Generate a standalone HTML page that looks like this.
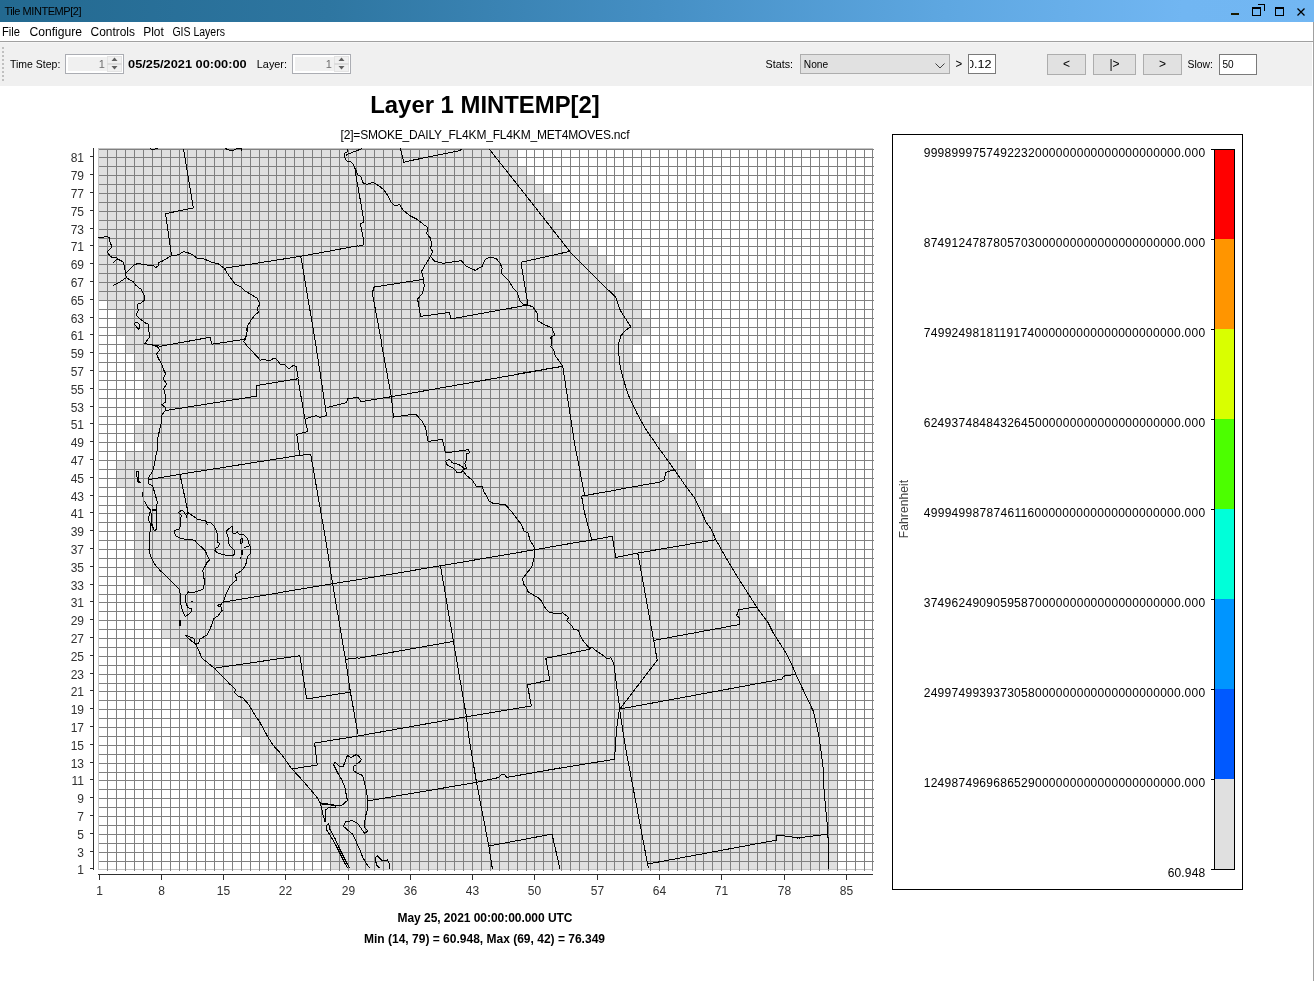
<!DOCTYPE html>
<html><head><meta charset="utf-8"><title>Tile MINTEMP[2]</title>
<style>
html,body{margin:0;padding:0;background:#fff;}
body{width:1314px;height:981px;overflow:hidden;position:relative;font-family:"Liberation Sans",sans-serif;}
svg{position:absolute;left:0;top:0;display:block;will-change:transform;}
svg text{font-family:"Liberation Sans",sans-serif;}
.ui11{font-size:11px;fill:#000;}
.ui11b{font-size:11px;font-weight:bold;fill:#000;}
.ui12{font-size:12px;fill:#000;}
.tk{font-size:12px;fill:#303030;}
.ttl{font-size:24px;font-weight:bold;fill:#000;}
.sub{font-size:12px;fill:#000;}
.ft{font-size:12px;font-weight:bold;fill:#000;}
.lg{font-size:12px;fill:#000;}
.fh{font-size:12px;fill:#404040;}
</style></head><body>
<svg id="plot" width="1314" height="981" viewBox="0 0 1314 981">
<rect x="0" y="0" width="1314" height="981" fill="#fff"/>
<defs><linearGradient id="tg" x1="0" y1="0" x2="1" y2="0"><stop offset="0" stop-color="#236990"/><stop offset="0.25" stop-color="#2e76a1"/><stop offset="0.5" stop-color="#458fc4"/><stop offset="0.72" stop-color="#5ea7e1"/><stop offset="0.9" stop-color="#71b6f2"/><stop offset="1" stop-color="#72b7f3"/></linearGradient></defs>
<rect x="0" y="0" width="1314" height="22" fill="url(#tg)"/>
<text x="4.5" y="14.8" class="ui11" textLength="77" lengthAdjust="spacing">Tile MINTEMP[2]</text>
<g shape-rendering="crispEdges" fill="none" stroke="#000"><path d="M1231 14H1239" stroke="#1a1a00" stroke-width="2"/><path d="M1252 8H1261" stroke-width="2"/><path d="M1252.5 9V15.5H1260.5V9"/><path d="M1258 4.5H1264.5V11"/><path d="M1275 8H1284" stroke-width="2"/><path d="M1275.5 9V15.5H1283.5V9"/></g>
<path d="M1297.5 8.5L1304.5 15.5M1304.5 8.5L1297.5 15.5" stroke="#000" stroke-width="1.3" fill="none"/>
<rect x="0" y="22" width="1314" height="19" fill="#fff"/>
<text x="2" y="35.7" class="ui12" textLength="18" lengthAdjust="spacingAndGlyphs">File</text>
<text x="29.4" y="35.7" class="ui12" textLength="52.6" lengthAdjust="spacingAndGlyphs">Configure</text>
<text x="90.5" y="35.7" class="ui12" textLength="44.5" lengthAdjust="spacingAndGlyphs">Controls</text>
<text x="143.2" y="35.7" class="ui12" textLength="20.6" lengthAdjust="spacingAndGlyphs">Plot</text>
<text x="172.4" y="35.7" class="ui12" textLength="52.5" lengthAdjust="spacingAndGlyphs">GIS Layers</text>
<rect x="0" y="41" width="1314" height="1" fill="#a0a0a0"/>
<rect x="0" y="42" width="1312" height="44" fill="#f0f0f0"/>
<rect x="0" y="42" width="1312" height="1" fill="#f6f6f6"/>
<rect x="1312" y="42" width="1" height="44" fill="#fff"/>
<rect x="1313" y="22" width="1" height="959" fill="#a0a0a0"/>
<rect x="2" y="47" width="2" height="2" fill="#c0c0c0"/><rect x="2" y="51" width="2" height="2" fill="#c0c0c0"/><rect x="2" y="55" width="2" height="2" fill="#c0c0c0"/><rect x="2" y="59" width="2" height="2" fill="#c0c0c0"/><rect x="2" y="63" width="2" height="2" fill="#c0c0c0"/><rect x="2" y="67" width="2" height="2" fill="#c0c0c0"/><rect x="2" y="71" width="2" height="2" fill="#c0c0c0"/><rect x="2" y="75" width="2" height="2" fill="#c0c0c0"/><rect x="2" y="79" width="2" height="2" fill="#c0c0c0"/>
<text x="10" y="67.8" class="ui11" textLength="50.3" lengthAdjust="spacingAndGlyphs">Time Step:</text>
<rect x="65.5" y="54.5" width="58" height="19" fill="#fff" stroke="#abadb3" shape-rendering="crispEdges"/><rect x="68" y="57" width="39" height="14" fill="#f0f0f0"/><rect x="107" y="56" width="15" height="16" fill="#f0f0f0"/><rect x="107.5" y="56.5" width="14" height="15" fill="none" stroke="#e3e3e3" shape-rendering="crispEdges"/><rect x="107" y="63" width="15" height="2" fill="#dcdcdc"/><path d="M114.5 57.6L117.5 61H111.5Z" fill="#606060"/><path d="M114.5 69.4L117.5 66H111.5Z" fill="#606060"/><text x="104.8" y="68" text-anchor="end" class="ui11" style="fill:#6d6d6d">1</text>
<text x="128.1" y="67.8" class="ui11b" textLength="118.6" lengthAdjust="spacingAndGlyphs">05/25/2021 00:00:00</text>
<text x="256.8" y="67.8" class="ui11" textLength="30.2" lengthAdjust="spacingAndGlyphs">Layer:</text>
<rect x="292.5" y="54.5" width="58" height="19" fill="#fff" stroke="#abadb3" shape-rendering="crispEdges"/><rect x="295" y="57" width="39" height="14" fill="#f0f0f0"/><rect x="334" y="56" width="15" height="16" fill="#f0f0f0"/><rect x="334.5" y="56.5" width="14" height="15" fill="none" stroke="#e3e3e3" shape-rendering="crispEdges"/><rect x="334" y="63" width="15" height="2" fill="#dcdcdc"/><path d="M341.5 57.6L344.5 61H338.5Z" fill="#606060"/><path d="M341.5 69.4L344.5 66H338.5Z" fill="#606060"/><text x="331.8" y="68" text-anchor="end" class="ui11" style="fill:#6d6d6d">1</text>
<text x="765.5" y="67.8" class="ui11" textLength="27.5" lengthAdjust="spacingAndGlyphs">Stats:</text>
<rect x="800.5" y="54.5" width="149" height="19" fill="#e1e1e1" stroke="#adadad" shape-rendering="crispEdges"/>
<text x="803.8" y="67.6" class="ui11" textLength="24.4" lengthAdjust="spacingAndGlyphs">None</text>
<path d="M935.5 63.5L940 68L944.5 63.5" stroke="#404040" stroke-width="1" fill="none"/>
<text x="955.6" y="68" class="ui12" textLength="6.7" lengthAdjust="spacingAndGlyphs">&gt;</text>
<rect x="968.5" y="54.5" width="27" height="19" fill="#fff" stroke="#7a7a7a" shape-rendering="crispEdges"/>
<clipPath id="tb1"><rect x="970" y="55" width="25" height="18"/></clipPath>
<text x="967" y="67.8" class="ui11" clip-path="url(#tb1)" textLength="24.6" lengthAdjust="spacingAndGlyphs">0.12</text>
<rect x="1047.5" y="54.5" width="38" height="20" fill="#e1e1e1" stroke="#adadad" shape-rendering="crispEdges"/>
<text x="1066.5" y="68.3" text-anchor="middle" class="ui12">&lt;</text>
<rect x="1093.5" y="54.5" width="42" height="20" fill="#e1e1e1" stroke="#adadad" shape-rendering="crispEdges"/>
<text x="1114.5" y="68.3" text-anchor="middle" class="ui12">|&gt;</text>
<rect x="1143.5" y="54.5" width="38" height="20" fill="#e1e1e1" stroke="#adadad" shape-rendering="crispEdges"/>
<text x="1162.5" y="68.3" text-anchor="middle" class="ui12">&gt;</text>
<text x="1187.6" y="67.8" class="ui11" textLength="25.4" lengthAdjust="spacingAndGlyphs">Slow:</text>
<rect x="1219.5" y="54.5" width="37" height="20" fill="#fff" stroke="#7a7a7a" shape-rendering="crispEdges"/>
<text x="1222.4" y="67.8" class="ui11" textLength="11.2" lengthAdjust="spacingAndGlyphs">50</text>
<rect x="98" y="149" width="419" height="8" fill="#e0e0e0"/>
<rect x="98" y="157" width="419" height="9" fill="#e0e0e0"/>
<rect x="98" y="166" width="428" height="9" fill="#e0e0e0"/>
<rect x="98" y="175" width="436" height="9" fill="#e0e0e0"/>
<rect x="98" y="184" width="445" height="9" fill="#e0e0e0"/>
<rect x="98" y="193" width="454" height="9" fill="#e0e0e0"/>
<rect x="98" y="202" width="463" height="9" fill="#e0e0e0"/>
<rect x="98" y="211" width="463" height="9" fill="#e0e0e0"/>
<rect x="98" y="220" width="472" height="9" fill="#e0e0e0"/>
<rect x="98" y="229" width="481" height="9" fill="#e0e0e0"/>
<rect x="98" y="238" width="490" height="8" fill="#e0e0e0"/>
<rect x="98" y="246" width="499" height="9" fill="#e0e0e0"/>
<rect x="98" y="255" width="508" height="9" fill="#e0e0e0"/>
<rect x="98" y="264" width="516" height="9" fill="#e0e0e0"/>
<rect x="98" y="273" width="525" height="9" fill="#e0e0e0"/>
<rect x="98" y="282" width="534" height="9" fill="#e0e0e0"/>
<rect x="98" y="291" width="534" height="9" fill="#e0e0e0"/>
<rect x="107" y="300" width="534" height="9" fill="#e0e0e0"/>
<rect x="116" y="309" width="525" height="9" fill="#e0e0e0"/>
<rect x="116" y="318" width="534" height="9" fill="#e0e0e0"/>
<rect x="116" y="327" width="534" height="8" fill="#e0e0e0"/>
<rect x="125" y="335" width="516" height="9" fill="#e0e0e0"/>
<rect x="125" y="344" width="507" height="9" fill="#e0e0e0"/>
<rect x="134" y="353" width="498" height="9" fill="#e0e0e0"/>
<rect x="134" y="362" width="507" height="9" fill="#e0e0e0"/>
<rect x="143" y="371" width="498" height="9" fill="#e0e0e0"/>
<rect x="143" y="380" width="498" height="9" fill="#e0e0e0"/>
<rect x="143" y="389" width="507" height="9" fill="#e0e0e0"/>
<rect x="143" y="398" width="507" height="9" fill="#e0e0e0"/>
<rect x="143" y="407" width="507" height="9" fill="#e0e0e0"/>
<rect x="143" y="416" width="516" height="8" fill="#e0e0e0"/>
<rect x="134" y="424" width="534" height="9" fill="#e0e0e0"/>
<rect x="134" y="433" width="543" height="9" fill="#e0e0e0"/>
<rect x="143" y="442" width="534" height="9" fill="#e0e0e0"/>
<rect x="125" y="451" width="561" height="9" fill="#e0e0e0"/>
<rect x="116" y="460" width="579" height="9" fill="#e0e0e0"/>
<rect x="116" y="469" width="587" height="9" fill="#e0e0e0"/>
<rect x="116" y="478" width="587" height="9" fill="#e0e0e0"/>
<rect x="125" y="487" width="587" height="9" fill="#e0e0e0"/>
<rect x="125" y="496" width="587" height="9" fill="#e0e0e0"/>
<rect x="125" y="505" width="596" height="8" fill="#e0e0e0"/>
<rect x="134" y="513" width="596" height="9" fill="#e0e0e0"/>
<rect x="134" y="522" width="596" height="9" fill="#e0e0e0"/>
<rect x="134" y="531" width="605" height="9" fill="#e0e0e0"/>
<rect x="134" y="540" width="605" height="9" fill="#e0e0e0"/>
<rect x="134" y="549" width="614" height="9" fill="#e0e0e0"/>
<rect x="134" y="558" width="614" height="9" fill="#e0e0e0"/>
<rect x="134" y="567" width="623" height="9" fill="#e0e0e0"/>
<rect x="143" y="576" width="614" height="9" fill="#e0e0e0"/>
<rect x="152" y="585" width="614" height="9" fill="#e0e0e0"/>
<rect x="161" y="594" width="614" height="8" fill="#e0e0e0"/>
<rect x="161" y="602" width="614" height="9" fill="#e0e0e0"/>
<rect x="161" y="611" width="623" height="9" fill="#e0e0e0"/>
<rect x="161" y="620" width="631" height="9" fill="#e0e0e0"/>
<rect x="161" y="629" width="631" height="9" fill="#e0e0e0"/>
<rect x="170" y="638" width="631" height="9" fill="#e0e0e0"/>
<rect x="179" y="647" width="622" height="9" fill="#e0e0e0"/>
<rect x="179" y="656" width="631" height="9" fill="#e0e0e0"/>
<rect x="187" y="665" width="623" height="9" fill="#e0e0e0"/>
<rect x="196" y="674" width="623" height="9" fill="#e0e0e0"/>
<rect x="205" y="683" width="614" height="8" fill="#e0e0e0"/>
<rect x="214" y="691" width="614" height="9" fill="#e0e0e0"/>
<rect x="223" y="700" width="605" height="9" fill="#e0e0e0"/>
<rect x="232" y="709" width="596" height="9" fill="#e0e0e0"/>
<rect x="241" y="718" width="587" height="9" fill="#e0e0e0"/>
<rect x="241" y="727" width="596" height="9" fill="#e0e0e0"/>
<rect x="250" y="736" width="587" height="9" fill="#e0e0e0"/>
<rect x="250" y="745" width="587" height="9" fill="#e0e0e0"/>
<rect x="259" y="754" width="578" height="9" fill="#e0e0e0"/>
<rect x="268" y="763" width="569" height="9" fill="#e0e0e0"/>
<rect x="276" y="772" width="561" height="8" fill="#e0e0e0"/>
<rect x="276" y="780" width="561" height="9" fill="#e0e0e0"/>
<rect x="285" y="789" width="552" height="9" fill="#e0e0e0"/>
<rect x="294" y="798" width="543" height="9" fill="#e0e0e0"/>
<rect x="303" y="807" width="534" height="9" fill="#e0e0e0"/>
<rect x="303" y="816" width="534" height="9" fill="#e0e0e0"/>
<rect x="312" y="825" width="525" height="9" fill="#e0e0e0"/>
<rect x="312" y="834" width="525" height="9" fill="#e0e0e0"/>
<rect x="321" y="843" width="516" height="9" fill="#e0e0e0"/>
<rect x="321" y="852" width="516" height="9" fill="#e0e0e0"/>
<rect x="330" y="861" width="507" height="8" fill="#e0e0e0"/>
<path d="M98.5 148V870M98 148.5H873M98 869.5H873" stroke="#c4c4c4" stroke-width="1" fill="none" shape-rendering="crispEdges"/>
<path d="M107.5 149V871M116.5 149V871M125.5 149V871M134.5 149V871M143.5 149V871M152.5 149V871M161.5 149V871M170.5 149V871M179.5 149V871M187.5 149V871M196.5 149V871M205.5 149V871M214.5 149V871M223.5 149V871M232.5 149V871M241.5 149V871M250.5 149V871M259.5 149V871M268.5 149V871M276.5 149V871M285.5 149V871M294.5 149V871M303.5 149V871M312.5 149V871M321.5 149V871M330.5 149V871M339.5 149V871M348.5 149V871M356.5 149V871M365.5 149V871M374.5 149V871M383.5 149V871M392.5 149V871M401.5 149V871M410.5 149V871M419.5 149V871M428.5 149V871M437.5 149V871M445.5 149V871M454.5 149V871M463.5 149V871M472.5 149V871M481.5 149V871M490.5 149V871M499.5 149V871M508.5 149V871M517.5 149V871M526.5 149V871M534.5 149V871M543.5 149V871M552.5 149V871M561.5 149V871M570.5 149V871M579.5 149V871M588.5 149V871M597.5 149V871M606.5 149V871M614.5 149V871M623.5 149V871M632.5 149V871M641.5 149V871M650.5 149V871M659.5 149V871M668.5 149V871M677.5 149V871M686.5 149V871M695.5 149V871M703.5 149V871M712.5 149V871M721.5 149V871M730.5 149V871M739.5 149V871M748.5 149V871M757.5 149V871M766.5 149V871M775.5 149V871M784.5 149V871M792.5 149V871M801.5 149V871M810.5 149V871M819.5 149V871M828.5 149V871M837.5 149V871M846.5 149V871M855.5 149V871M864.5 149V871M872.5 149V871M99 149.5H874M99 157.5H874M99 166.5H874M99 175.5H874M99 184.5H874M99 193.5H874M99 202.5H874M99 211.5H874M99 220.5H874M99 229.5H874M99 238.5H874M99 246.5H874M99 255.5H874M99 264.5H874M99 273.5H874M99 282.5H874M99 291.5H874M99 300.5H874M99 309.5H874M99 318.5H874M99 327.5H874M99 335.5H874M99 344.5H874M99 353.5H874M99 362.5H874M99 371.5H874M99 380.5H874M99 389.5H874M99 398.5H874M99 407.5H874M99 416.5H874M99 424.5H874M99 433.5H874M99 442.5H874M99 451.5H874M99 460.5H874M99 469.5H874M99 478.5H874M99 487.5H874M99 496.5H874M99 505.5H874M99 513.5H874M99 522.5H874M99 531.5H874M99 540.5H874M99 549.5H874M99 558.5H874M99 567.5H874M99 576.5H874M99 585.5H874M99 594.5H874M99 602.5H874M99 611.5H874M99 620.5H874M99 629.5H874M99 638.5H874M99 647.5H874M99 656.5H874M99 665.5H874M99 674.5H874M99 683.5H874M99 691.5H874M99 700.5H874M99 709.5H874M99 718.5H874M99 727.5H874M99 736.5H874M99 745.5H874M99 754.5H874M99 763.5H874M99 772.5H874M99 780.5H874M99 789.5H874M99 798.5H874M99 807.5H874M99 816.5H874M99 825.5H874M99 834.5H874M99 843.5H874M99 852.5H874M99 861.5H874" stroke="#808080" stroke-width="1" fill="none" shape-rendering="crispEdges"/>
<clipPath id="gc"><rect x="98" y="148" width="775" height="722"/></clipPath>
<path clip-path="url(#gc)" d="M183.5 149.0 L193.4 208.0 L165.6 213.6 L171.5 255.7 M217.9 263.5 L224.2 268.3 M224.2 268.3 L300.8 256.3 L358.0 245.8 M300.8 256.3 L315.7 344.0 M224.2 268.3 L229.2 276.2 L235.2 284.2 L241.1 287.1 L245.1 291.1 L252.1 295.1 L257.0 298.1 L260.0 304.0 L257.0 309.0 L258.6 312.0 L255.0 315.0 L251.1 319.9 L247.1 326.9 L246.7 330.9 M136.2 315.0 L138.7 318.0 L142.7 320.9 L146.7 323.9 L148.1 323.9 L149.3 334.9 L150.1 336.8 L146.7 340.8 L144.7 344.0 M133.8 323.5 L136.8 322.3 L140.1 324.9 L138.7 329.5 L135.8 325.9 L133.8 323.5 M358.0 186.8 L364.0 221.6 L360.4 224.1 L364.0 242.4 L363.0 245.0 L358.0 246.4 M358.0 174.8 L361.0 176.8 L363.0 182.8 L366.9 184.4 L372.9 182.4 L378.9 185.8 L383.8 189.7 L387.8 195.7 L390.8 201.7 L394.8 205.7 L399.7 204.7 L402.7 209.6 L409.7 215.6 L417.6 219.6 L423.6 224.5 L428.0 227.5 L426.6 233.5 L430.6 238.4 L431.5 244.4 L430.6 248.4 L432.5 251.4 L430.6 256.3 M430.6 256.3 L434.5 261.3 L443.5 263.3 L461.4 260.7 L466.3 266.3 L472.3 269.3 L475.3 270.3 L482.2 266.3 L485.2 259.3 L489.2 257.3 L496.1 258.3 L500.1 263.3 L502.1 268.3 L501.5 273.2 L509.1 281.2 L513.0 288.1 L517.0 292.1 L520.0 301.1 L523.0 304.0 L528.0 305.0 M430.6 256.3 L425.6 264.3 L421.6 271.2 L423.6 279.2 L424.2 286.2 L422.6 293.1 L417.6 299.1 L420.6 316.4 L449.4 312.4 L451.0 319.0 L528.0 305.0 L532.9 307.0 L537.9 314.0 L537.9 320.9 L544.9 324.9 L551.8 327.9 L554.8 334.9 M424.2 279.2 L373.9 287.1 L372.3 293.1 L381.9 344.0 M412.3 160.1 L460.4 150.6 L461.4 149.0 M489.2 149.0 L500.1 162.9 L523.0 191.7 L569.7 251.4 M569.7 251.4 L521.0 262.3 L528.0 305.0 M569.7 251.4 L598.5 280.8 L615.4 296.7 L620.4 310.6 L630.9 326.9 L625.3 330.5 L621.0 335.5 L619.0 342.4 L618.8 352.4 L619.4 362.3 L622.4 376.2 L628.3 395.1 L637.3 414.0 L646.2 429.9 L655.2 442.8 L657.1 445.8 M554.8 334.9 L550.8 337.5 L551.8 342.4 L550.8 346.4 L553.8 350.4 L555.4 356.3 L558.7 360.3 L562.7 366.3 M518.0 373.8 L562.7 366.3 L574.7 444.0 M150.7 344.0 L157.6 347.0 L159.6 350.0 L156.6 353.9 L158.6 358.9 L161.6 363.9 L163.6 369.8 L165.6 373.8 L163.2 378.8 L166.6 383.8 L163.6 388.7 L165.6 395.7 L166.0 401.6 L162.0 404.6 L165.6 407.6 L165.2 410.6 L161.6 415.6 L161.2 423.5 L159.2 431.5 L157.6 439.4 L158.0 447.4 L156.0 455.3 L154.7 463.3 L152.7 471.2 L148.7 477.2 L148.1 479.6 M165.2 410.6 L257.0 396.1 L256.0 385.7 L297.8 378.8 M298.0 379.4 L304.7 417.5 L307.7 431.5 L296.8 434.4 L299.8 455.3 M315.7 344.0 L326.6 415.6 L319.6 417.5 L316.7 415.6 L305.7 418.5 M326.6 407.6 L346.5 402.6 L347.5 398.7 L358.0 397.3 M148.1 479.6 L180.5 474.2 L299.8 455.3 L310.7 454.3 L325.6 539.0 M180.0 474.7 L188.2 513.0 M147.9 479.5 L149.2 484.3 L152.6 485.7 L155.4 495.2 L157.4 502.7 L156.5 504.8 L156.7 510.3 L156.7 528.7 L154.7 530.8 L150.6 523.9 L148.5 519.8 L149.2 514.4 L150.6 510.3 L147.9 507.5 L145.8 503.4 L144.4 501.4 M152.0 509.7 L156.7 509.7 M152.0 510.3 L156.7 510.3 M150.6 511.6 L152.0 517.1 L151.3 522.6 L154.0 529.4 M150.6 523.9 L149.9 533.5 L149.2 550.0 M136.7 471.3 L138.3 471.3 L138.7 480.2 L140.3 482.9 L138.3 482.9 L136.9 476.1 L136.7 471.3 M142.0 491.8 L142.0 496.6 M142.5 491.8 L142.5 496.6 M381.5 344.0 L391.4 396.7 L393.4 417.1 L415.6 414.0 L421.6 420.5 L425.6 427.5 L428.0 441.4 L442.5 439.4 L445.5 452.9 L468.3 449.7 L469.7 452.9 L466.3 453.7 L466.9 459.3 L464.9 463.3 L466.3 468.2 L462.4 470.2 L466.3 475.2 L472.3 480.2 L476.3 486.1 L482.2 486.7 L484.2 492.1 L489.2 501.0 L493.2 503.4 L505.1 504.6 L511.1 511.0 L517.0 518.9 L521.0 523.9 L524.0 530.9 L528.0 532.8 L529.9 539.8 M445.5 461.3 L449.4 459.3 L452.4 462.9 L458.4 464.3 L464.3 468.2 L461.4 472.2 L457.4 472.8 L453.4 468.2 L447.4 465.3 L445.5 461.3 M358.0 397.3 L361.0 401.6 L391.4 396.7 L562.7 366.3 M574.7 444.0 L584.6 495.1 L581.6 496.1 L584.6 513.0 L591.6 539.0 M581.6 496.1 L618.0 489.7 M657.1 445.8 L661.5 451.8 L674.4 469.7 L685.3 485.6 L694.3 497.5 L700.2 509.4 L706.2 522.3 L711.2 529.3 L716.1 540.2 L725.1 556.1 L735.0 573.0 L747.0 591.9 L757.9 609.0 M674.4 469.7 L665.5 472.6 L664.5 479.6 L660.5 482.0 L618.0 489.5 M591.5 539.0 L590.9 540.2 M578.0 542.2 L590.9 540.2 L612.2 536.2 L615.8 557.5 L637.6 553.1 L716.1 539.6 M187.4 512.5 L186.5 518.0 M187.4 512.5 L185.6 514.8 L183.8 511.6 L181.5 510.2 L178.7 512.5 L181.5 515.7 L180.1 520.3 L180.6 525.8 L179.2 529.0 L175.0 530.4 L174.1 532.7 L176.0 535.9 L179.2 537.9 L182.8 538.4 L185.1 539.5 L192.5 540.0 L195.0 540.3 L197.5 543.7 L201.7 547.3 L205.3 550.6 L206.7 554.2 L208.5 557.9 L209.4 560.2 L207.2 562.0 L205.3 566.1 L203.5 568.4 L202.6 570.7 L203.5 574.4 L203.0 577.2 L204.9 579.4 M187.4 512.5 L190.6 514.3 L193.9 516.6 L197.5 519.4 L201.2 520.1 L205.3 520.7 L206.7 522.6 L207.2 524.4 L206.7 522.6 L210.4 522.3 L213.1 524.9 L215.4 528.5 L217.0 533.1 L217.7 537.7 L217.5 542.3 L219.5 543.2 L219.1 545.0 L217.7 547.3 L215.9 547.8 L215.0 550.6 L216.8 552.4 L220.0 553.8 L225.0 555.1 L233.3 555.6 L234.7 553.3 L234.7 550.6 L232.4 548.7 L230.1 546.0 L228.3 542.8 L228.7 538.6 L227.3 535.4 L226.4 531.3 L229.2 528.5 L232.4 526.2 L232.8 533.1 L236.1 533.1 L237.0 531.7 L239.7 534.5 L243.4 534.5 L246.1 536.8 L248.0 540.0 L248.0 543.2 L249.8 545.0 L250.7 548.7 L250.6 553.3 L248.0 556.1 L246.6 559.7 L246.1 563.4 L244.8 566.1 L242.5 569.8 L238.8 572.6 L235.6 574.4 L236.1 578.1 L236.5 580.0 M240.6 538.6 L242.0 538.2 L242.5 540.9 L242.0 543.2 L240.6 543.2 L240.2 540.9 L240.6 538.6 M241.1 550.1 L242.3 550.1 L242.5 554.2 L241.4 554.2 L241.1 550.1 M244.3 547.8 L248.9 546.0 M240.2 557.9 L241.1 558.3 M148.9 549.0 L150.3 555.8 L154.4 564.0 L160.5 570.9 L168.7 578.4 L174.2 584.5 L179.0 589.3 L181.0 596.8 L180.7 603.6 L182.4 610.5 L185.1 616.6 L189.2 613.9 L191.9 611.2 L191.3 608.4 L187.8 607.7 L185.8 602.3 L185.8 595.4 L188.5 592.0 L193.3 592.7 L198.8 590.7 L202.9 589.3 L204.9 581.8 L204.9 579.3 M179.9 620.0 L179.9 625.5 M180.6 620.0 L180.6 625.5 L181.3 625.5 M191.3 601.6 L193.3 601.6 M192.9 592.4 L194.7 592.4 M236.5 580.0 L235.7 580.4 L230.2 585.9 L226.1 594.1 L223.4 601.6 L220.6 605.0 L222.0 610.5 L217.9 615.9 L213.8 618.7 L210.4 628.2 L207.0 635.1 L199.5 639.2 L198.8 643.3 L194.7 643.3 L194.0 638.5 L185.8 635.1 L187.8 637.8 L196.0 644.6 L202.2 658.3 L213.8 667.8 L228.8 683.0 M219.3 603.9 L220.6 605.3 L219.3 606.6 L217.9 605.3 L219.3 603.9 M325.6 539.0 L332.6 583.7 L345.5 659.3 L350.4 692.1 L358.0 734.0 M223.2 602.2 L332.6 583.7 L358.0 579.7 M214.3 668.2 L299.8 655.7 L306.7 699.0 L350.4 692.1 M345.5 659.3 L358.0 657.7 M228.5 683.0 L235.4 689.1 L234.7 692.6 L238.1 696.0 L242.9 698.0 L248.4 704.2 L254.5 714.4 L260.0 722.6 L268.2 737.6 L273.6 745.8 L281.8 754.7 L291.4 768.4 L300.9 778.6 L310.5 789.6 L317.3 797.8 L320.8 803.9 M356.0 736.3 L314.6 743.1 L317.3 765.0 L290.7 769.1 M356.0 754.7 L350.8 757.5 L347.4 755.4 L343.3 766.3 L339.9 767.0 L335.1 762.2 L333.7 765.0 L337.1 771.8 L341.9 780.0 L344.7 786.8 L347.4 800.5 L341.9 805.3 L336.5 805.9 L328.3 804.6 L320.8 803.9 M356.0 765.0 L353.5 766.3 L353.5 770.4 L356.0 772.5 M358.0 579.7 L440.5 565.8 L533.9 549.9 L577.8 542.2 M440.5 565.8 L453.4 641.4 L466.3 715.9 L468.3 734.0 M358.0 658.3 L453.4 641.4 M529.9 539.8 L532.9 545.0 L534.9 548.9 L533.9 558.9 L531.9 566.8 L527.0 572.8 L522.6 578.8 L523.4 583.7 L526.6 587.7 L528.0 591.7 L532.9 594.7 L537.9 597.6 L541.9 601.6 L544.9 607.6 L549.8 612.5 L556.8 613.5 L562.7 612.9 L568.7 617.5 L566.7 620.5 L571.7 625.5 L573.7 629.4 L578.6 630.4 L580.6 636.4 L583.6 641.4 L589.6 648.3 L592.6 647.3 L595.5 650.3 L604.5 656.3 L606.5 658.3 M589.6 649.3 L545.8 658.3 L549.8 680.1 L527.4 684.7 L531.3 706.0 M758.0 609.0 L768.0 622.5 L772.9 632.4 L784.9 651.3 L790.8 662.2 L795.8 674.2 L804.7 693.1 L813.7 711.9 M637.8 553.3 L653.7 640.4 L657.2 660.3 L619.9 709.0 M653.7 640.4 L739.5 624.5 L739.1 617.5 L736.7 615.5 L738.7 609.6 L756.0 607.0 M619.9 709.0 L717.3 691.1 L781.9 679.1 L783.3 676.2 L795.8 674.2 M606.0 658.3 L610.9 657.9 L613.9 664.2 L616.9 688.1 L619.9 709.0 M356.1 736.3 L357.6 736.1 L466.0 716.8 L531.6 705.9 M468.4 733.9 L476.5 782.4 L488.8 846.0 L492.4 868.9 M367.6 800.9 L476.5 782.4 L498.8 777.5 L500.8 775.1 L504.7 774.5 L506.7 777.5 L560.0 767.9 M488.8 846.0 L552.0 834.1 L560.0 868.9 M356.1 754.6 L358.6 756.0 L361.6 759.6 L359.6 762.0 L356.1 763.9 M356.1 772.5 L362.6 775.5 L364.6 783.4 L366.6 791.4 L367.6 800.9 L367.6 809.3 L365.2 817.2 L364.6 827.2 L367.6 831.1 L364.6 833.5 L361.6 829.1 L357.6 823.2 L351.7 820.6 L345.7 821.8 L343.3 826.2 L347.7 830.1 L352.7 834.1 L354.7 838.1 L356.7 843.1 L359.6 849.0 L362.6 857.0 L366.6 863.9 L369.6 867.9 M326.8 825.2 L328.8 823.6 L329.8 829.1 L334.8 838.1 L338.8 847.0 L342.7 855.0 L346.7 862.9 L349.7 867.9 M326.8 825.2 L326.8 830.1 L331.8 838.1 L336.8 847.0 L340.7 855.0 L344.7 862.9 L347.7 867.9 M379.5 867.9 L376.5 864.9 L375.1 858.0 L377.5 856.0 L382.5 860.9 L387.5 860.0 L389.4 863.9 L389.4 868.9 M619.5 708.9 L625.5 747.6 L648.3 867.9 M619.5 708.9 L616.5 729.8 L614.5 759.2 L540.0 771.5 M648.3 863.9 L776.5 840.1 L776.1 836.1 L778.5 835.1 L800.0 838.1 M813.6 711.9 L815.8 721.8 L818.8 735.7 L820.8 749.6 L823.1 767.5 L823.7 785.4 L825.7 809.3 L827.7 829.1 L828.3 845.0 L828.7 868.9 M796.9 838.1 L827.7 834.1 M98.0 237.4 L102.1 237.8 L104.0 236.9 L106.7 236.0 L109.0 237.4 L109.9 241.5 L111.8 246.6 L109.9 249.3 L107.2 252.1 L109.9 255.7 L111.8 257.1 L116.3 257.1 L117.7 258.5 L115.0 261.2 L113.1 262.6 M117.7 259.1 L122.8 261.7 L124.1 265.4 L125.1 270.0 L125.5 273.6 L126.4 277.3 M113.1 285.6 L120.0 281.9 L125.5 278.2 L127.4 277.8 M125.5 273.2 L134.7 264.4 L138.8 263.5 L145.7 264.9 L153.0 265.4 L155.8 267.7 L158.1 265.8 L158.6 262.6 L162.2 261.2 L166.8 258.5 L171.4 255.7 M171.4 255.7 L178.7 254.8 L183.3 251.6 L187.4 252.5 L192.5 254.8 L198.0 258.9 L200.8 258.0 L206.3 259.9 L212.7 262.6 L218.0 263.5 M126.4 277.3 L129.7 280.0 L132.9 281.4 L135.6 285.1 L138.4 287.4 L141.1 289.2 L143.0 292.9 L144.3 295.6 L144.3 300.2 L141.1 303.0 L137.9 303.9 L137.4 306.7 L138.4 310.3 L136.5 314.0 L136.1 315.0 M347.2 148.7 L347.7 151.9 L345.4 152.3 L344.0 154.2 L344.5 156.9 L345.9 159.7 L347.7 161.5 L350.5 161.5 L352.8 163.8 L354.6 166.6 L356.0 170.2 L357.3 173.9 L358.0 174.8 M362.4 148.5 L347.7 154.2 L345.9 155.6 M354.6 166.6 L356.9 181.7 L358.0 186.7 M400.5 148.5 L403.7 162.2 L420.0 158.8 M150.0 148.8 L152.5 149.4 L158.3 148.6 M225.3 148.5 L228.6 150.0 L233.7 150.0 L236.2 148.9 L241.2 148.9 L241.2 150.5 M320.6 804.7 L321.6 808.3 L322.5 812.9 L323.9 817.5 L324.8 821.7 L325.5 821.7 L325.5 817.5 L325.2 810.2 L328.4 807.9 L332.1 807.2 L335.3 807.2 L336.2 805.6 M320.6 804.7 L321.6 803.5 L325.7 803.8 L332.6 804.4 L334.4 805.8 L336.2 805.6 M322.0 804.0 L325.7 804.3 M324.5 818.4 L324.5 821.7 M144.4 342.8 L147.9 344.2 L154.7 345.5 L160.8 346.2 L210.0 337.3 L212.1 344.2 L244.2 339.4 M247.6 328.2 L247.4 330.0 L246.3 335.5 L245.4 338.7 L243.8 341.5 L246.1 344.7 L248.3 347.4 L252.9 352.0 L257.5 357.1 L260.3 360.1 L264.4 359.4 L267.2 360.3 L270.4 360.7 L273.6 358.0 L276.8 359.4 L280.0 363.9 L282.8 364.9 L285.0 364.7 L287.8 368.1 L289.6 368.1 L293.3 365.3 L296.1 366.7 L297.4 373.1 L298.3 378.2 M243.8 339.2 L245.4 338.7" stroke="#000" stroke-width="1" fill="none" stroke-linejoin="round" shape-rendering="crispEdges"/>
<path d="M93.5 148V870M90 868.5H94M90 851.5H94M90 833.5H94M90 815.5H94M90 797.5H94M90 779.5H94M90 762.5H94M90 744.5H94M90 726.5H94M90 708.5H94M90 690.5H94M90 673.5H94M90 655.5H94M90 637.5H94M90 619.5H94M90 601.5H94M90 584.5H94M90 566.5H94M90 548.5H94M90 530.5H94M90 512.5H94M90 495.5H94M90 477.5H94M90 459.5H94M90 441.5H94M90 423.5H94M90 406.5H94M90 388.5H94M90 370.5H94M90 352.5H94M90 334.5H94M90 317.5H94M90 299.5H94M90 281.5H94M90 263.5H94M90 245.5H94M90 228.5H94M90 210.5H94M90 192.5H94M90 174.5H94M90 156.5H94M98 874.5H873M99.5 875V880M161.5 875V880M223.5 875V880M285.5 875V880M348.5 875V880M410.5 875V880M472.5 875V880M534.5 875V880M597.5 875V880M659.5 875V880M721.5 875V880M784.5 875V880M846.5 875V880" stroke="#303030" stroke-width="1" fill="none" shape-rendering="crispEdges"/>
<text x="84" y="874.0" text-anchor="end" class="tk">1</text>
<text x="84" y="857.0" text-anchor="end" class="tk">3</text>
<text x="84" y="839.0" text-anchor="end" class="tk">5</text>
<text x="84" y="821.0" text-anchor="end" class="tk">7</text>
<text x="84" y="803.0" text-anchor="end" class="tk">9</text>
<text x="84" y="785.0" text-anchor="end" class="tk">11</text>
<text x="84" y="768.0" text-anchor="end" class="tk">13</text>
<text x="84" y="750.0" text-anchor="end" class="tk">15</text>
<text x="84" y="732.0" text-anchor="end" class="tk">17</text>
<text x="84" y="714.0" text-anchor="end" class="tk">19</text>
<text x="84" y="696.0" text-anchor="end" class="tk">21</text>
<text x="84" y="679.0" text-anchor="end" class="tk">23</text>
<text x="84" y="661.0" text-anchor="end" class="tk">25</text>
<text x="84" y="643.0" text-anchor="end" class="tk">27</text>
<text x="84" y="625.0" text-anchor="end" class="tk">29</text>
<text x="84" y="607.0" text-anchor="end" class="tk">31</text>
<text x="84" y="590.0" text-anchor="end" class="tk">33</text>
<text x="84" y="572.0" text-anchor="end" class="tk">35</text>
<text x="84" y="554.0" text-anchor="end" class="tk">37</text>
<text x="84" y="536.0" text-anchor="end" class="tk">39</text>
<text x="84" y="518.0" text-anchor="end" class="tk">41</text>
<text x="84" y="501.0" text-anchor="end" class="tk">43</text>
<text x="84" y="483.0" text-anchor="end" class="tk">45</text>
<text x="84" y="465.0" text-anchor="end" class="tk">47</text>
<text x="84" y="447.0" text-anchor="end" class="tk">49</text>
<text x="84" y="429.0" text-anchor="end" class="tk">51</text>
<text x="84" y="412.0" text-anchor="end" class="tk">53</text>
<text x="84" y="394.0" text-anchor="end" class="tk">55</text>
<text x="84" y="376.0" text-anchor="end" class="tk">57</text>
<text x="84" y="358.0" text-anchor="end" class="tk">59</text>
<text x="84" y="340.0" text-anchor="end" class="tk">61</text>
<text x="84" y="323.0" text-anchor="end" class="tk">63</text>
<text x="84" y="305.0" text-anchor="end" class="tk">65</text>
<text x="84" y="287.0" text-anchor="end" class="tk">67</text>
<text x="84" y="269.0" text-anchor="end" class="tk">69</text>
<text x="84" y="251.0" text-anchor="end" class="tk">71</text>
<text x="84" y="234.0" text-anchor="end" class="tk">73</text>
<text x="84" y="216.0" text-anchor="end" class="tk">75</text>
<text x="84" y="198.0" text-anchor="end" class="tk">77</text>
<text x="84" y="180.0" text-anchor="end" class="tk">79</text>
<text x="84" y="162.0" text-anchor="end" class="tk">81</text>
<text x="99.5" y="895" text-anchor="middle" class="tk">1</text>
<text x="161.5" y="895" text-anchor="middle" class="tk">8</text>
<text x="223.5" y="895" text-anchor="middle" class="tk">15</text>
<text x="285.5" y="895" text-anchor="middle" class="tk">22</text>
<text x="348.5" y="895" text-anchor="middle" class="tk">29</text>
<text x="410.5" y="895" text-anchor="middle" class="tk">36</text>
<text x="472.5" y="895" text-anchor="middle" class="tk">43</text>
<text x="534.5" y="895" text-anchor="middle" class="tk">50</text>
<text x="597.5" y="895" text-anchor="middle" class="tk">57</text>
<text x="659.5" y="895" text-anchor="middle" class="tk">64</text>
<text x="721.5" y="895" text-anchor="middle" class="tk">71</text>
<text x="784.5" y="895" text-anchor="middle" class="tk">78</text>
<text x="846.5" y="895" text-anchor="middle" class="tk">85</text>
<text x="485" y="112.6" text-anchor="middle" class="ttl" textLength="229.5" lengthAdjust="spacingAndGlyphs">Layer 1 MINTEMP[2]</text>
<text x="485" y="139" text-anchor="middle" class="sub" textLength="289" lengthAdjust="spacing">[2]=SMOKE_DAILY_FL4KM_FL4KM_MET4MOVES.ncf</text>
<text x="485" y="922" text-anchor="middle" class="ft" textLength="175" lengthAdjust="spacing">May 25, 2021 00:00:00.000 UTC</text>
<text x="484.5" y="942.6" text-anchor="middle" class="ft" textLength="241" lengthAdjust="spacing">Min (14, 79) = 60.948, Max (69, 42) = 76.349</text>
<rect x="892.5" y="134.5" width="350" height="755" fill="#fff" stroke="#000" stroke-width="1" shape-rendering="crispEdges"/>
<rect x="1214" y="149" width="21" height="90" fill="#ff0000"/>
<rect x="1214" y="239" width="21" height="90" fill="#ff9500"/>
<rect x="1214" y="329" width="21" height="90" fill="#d9ff00"/>
<rect x="1214" y="419" width="21" height="90" fill="#4cff00"/>
<rect x="1214" y="509" width="21" height="90" fill="#00ffd9"/>
<rect x="1214" y="599" width="21" height="90" fill="#0095ff"/>
<rect x="1214" y="689" width="21" height="90" fill="#0059ff"/>
<rect x="1214" y="779" width="21" height="90" fill="#e0e0e0"/>
<rect x="1214.5" y="149.5" width="20" height="720" fill="none" stroke="#000" stroke-width="1" shape-rendering="crispEdges"/>
<text x="1205.2" y="157" text-anchor="end" class="lg" textLength="281.5" lengthAdjust="spacing">9998999757492232000000000000000000000.000</text>
<text x="1205.2" y="247" text-anchor="end" class="lg" textLength="281.5" lengthAdjust="spacing">8749124787805703000000000000000000000.000</text>
<text x="1205.2" y="337" text-anchor="end" class="lg" textLength="281.5" lengthAdjust="spacing">7499249818119174000000000000000000000.000</text>
<text x="1205.2" y="427" text-anchor="end" class="lg" textLength="281.5" lengthAdjust="spacing">6249374848432645000000000000000000000.000</text>
<text x="1205.2" y="517" text-anchor="end" class="lg" textLength="281.5" lengthAdjust="spacing">4999499878746116000000000000000000000.000</text>
<text x="1205.2" y="607" text-anchor="end" class="lg" textLength="281.5" lengthAdjust="spacing">3749624909059587000000000000000000000.000</text>
<text x="1205.2" y="697" text-anchor="end" class="lg" textLength="281.5" lengthAdjust="spacing">2499749939373058000000000000000000000.000</text>
<text x="1205.2" y="787" text-anchor="end" class="lg" textLength="281.5" lengthAdjust="spacing">1249874969686529000000000000000000000.000</text>
<text x="1205.2" y="877" text-anchor="end" class="lg" textLength="37.5" lengthAdjust="spacing">60.948</text>
<path d="M1211 149.5H1214M1211 239.5H1214M1211 329.5H1214M1211 419.5H1214M1211 509.5H1214M1211 599.5H1214M1211 689.5H1214M1211 779.5H1214M1211 869.5H1214" stroke="#000" stroke-width="1" fill="none" shape-rendering="crispEdges"/>
<text transform="translate(908,509) rotate(-90)" text-anchor="middle" class="fh" textLength="58.3" lengthAdjust="spacing">Fahrenheit</text>
</svg>
</body></html>
